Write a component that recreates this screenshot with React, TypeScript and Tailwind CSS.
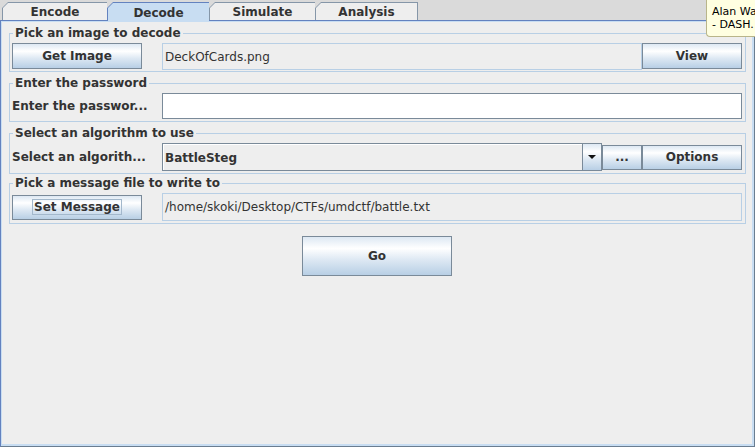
const font = "font-['DejaVu_Sans',sans-serif]";
const btn =
  "flex shrink-0 items-center justify-center border border-[#7a8a99] bg-[linear-gradient(to_bottom,#dde8f3_0%,#ffffff_30%,#dde8f3_60%,#b8cfe5_100%)] text-[12px] font-bold text-[#333333]";

function Tab({ label, w, selected, last }: { label: string; w: string; selected?: boolean; last?: boolean }) {
  return (
    <div
      className={`${w} relative shrink-0 [clip-path:polygon(6px_0,100%_0,100%_100%,0_100%,0_6px)] pl-px pt-px ${
        last ? "pr-px" : ""
      } ${selected ? "z-10 h-[19px] bg-[#6382bf]" : "h-[18px] bg-[#8596a8]"}`}
    >
      <div
        className={`flex h-full items-center justify-center [clip-path:polygon(5px_0,100%_0,100%_100%,0_100%,0_5px)] text-[12px] font-bold text-[#333333] ${
          selected ? "bg-[#c8ddf2]" : "bg-[#eeeeee]"
        }`}
      >
        <span className="pt-px">{label}</span>
      </div>
    </div>
  );
}

// titled border, like Swing's TitledBorder: the title sits on the top line
function Section({ title, className, children }: { title: string; className: string; children: React.ReactNode }) {
  return (
    <div className={`mr-[6px] ml-[7px] border border-[#b8cfe5] ${className}`}>
      <div className="-mt-[8px] ml-[3px] w-fit bg-[#eeeeee] px-[2px] text-[12px] leading-[15px] font-bold text-[#333333]">
        {title}
      </div>
      {children}
    </div>
  );
}

export default function App() {
  return (
    <div className={`${font} relative flex h-[447px] w-[755px] flex-col overflow-hidden bg-[#eeeeee]`}>
      <div className="flex h-[20px] shrink-0 items-start bg-[#dadada] pt-[2px] pl-[2px]">
        <Tab label="Encode" w="w-[105px]" />
        <Tab label="Decode" w="w-[102px]" selected />
        <Tab label="Simulate" w="w-[106px]" />
        <Tab label="Analysis" w="w-[103px]" last />
      </div>

      <div className="flex-1 border-t border-r border-b border-l border-t-[#6382bf] border-r-[#6a7d90] border-b-[#6a7d90] border-l-[#6382bf]">
        <div className="flex h-full flex-col border-t border-r-2 border-b-2 border-l border-[#c8ddf2]">
          <Section title="Pick an image to decode" className="mt-[11px]">
            <div className="mt-[2px] flex h-[27px] items-start pr-[3px] pl-[2px]">
              <div className={`${btn} h-[26px] w-[130px]`}>Get Image</div>
              <div className="ml-[20px] flex h-[27px] flex-1 items-center border border-[#b8cfe5] pl-[2px] text-[12px] text-[#333333]">
                DeckOfCards.png
              </div>
              <div className={`${btn} h-[26px] w-[100px]`}>View</div>
            </div>
            <div className="h-[1px]" />
          </Section>

          <Section title="Enter the password" className="mt-[11px]">
            <div className="mt-[2px] flex h-[26px] items-center pr-[3px] pl-[2px]">
              <div className="w-[150px] shrink-0 text-[12px] font-bold text-[#333333]">Enter the passwor...</div>
              <div className="h-[26px] flex-1 border border-[#7a8a99] bg-white" />
            </div>
            <div className="h-[2px]" />
          </Section>

          <Section title="Select an algorithm to use" className="mt-[11px]">
            <div className="mt-[2px] flex h-[28px] items-center pr-[3px] pl-[2px]">
              <div className="w-[150px] shrink-0 text-[12px] font-bold text-[#333333]">Select an algorith...</div>
              <div className="flex h-[28px] flex-1 border border-[#7a8a99] bg-[#eeeeee]">
                <div className="flex flex-1 items-center border-t border-l border-white pl-[1px] text-[12px] font-bold text-[#333333]">
                  BattleSteg
                </div>
                <div className="flex w-[19px] items-center justify-center border-l border-[#7a8a99] bg-[linear-gradient(to_bottom,#dde8f3_0%,#ffffff_30%,#dde8f3_60%,#b8cfe5_100%)]">
                  <div className="h-0 w-0 border-t-[4px] border-r-[4px] border-l-[4px] border-t-[#111111] border-r-transparent border-l-transparent" />
                </div>
              </div>
              <div className={`${btn} h-[25px] w-[40px]`}>...</div>
              <div className={`${btn} h-[25px] w-[100px]`}>Options</div>
            </div>
            <div className="h-[2px]" />
          </Section>

          <Section title="Pick a message file to write to" className="mt-[9px]">
            <div className="mt-[2px] flex h-[28px] items-center pr-[3px] pl-[2px]">
              <div className={`${btn} h-[25px] w-[130px]`}>
                <span className="border border-[#a3b8cc] px-px leading-[14px]">Set Message</span>
              </div>
              <div className="ml-[20px] flex h-[28px] flex-1 items-center border border-[#b8cfe5] pl-[2px] text-[12px] text-[#333333]">
                /home/skoki/Desktop/CTFs/umdctf/battle.txt
              </div>
            </div>
            <div className="h-[2px]" />
          </Section>

          <div className={`${btn} mt-[12px] h-[40px] w-[150px] self-center`}>Go</div>
        </div>
      </div>

      <div className="absolute top-0 left-[706px] h-[37px] w-[49px] overflow-hidden rounded-bl-[4px] border-b border-l border-[#b9b58a] bg-[#ffffe1] pt-[5px] pl-[5px] text-[11px] leading-[13px] text-black">
        <div className="whitespace-nowrap">Alan Wa</div>
        <div className="whitespace-nowrap">- DASH.</div>
      </div>
    </div>
  );
}
